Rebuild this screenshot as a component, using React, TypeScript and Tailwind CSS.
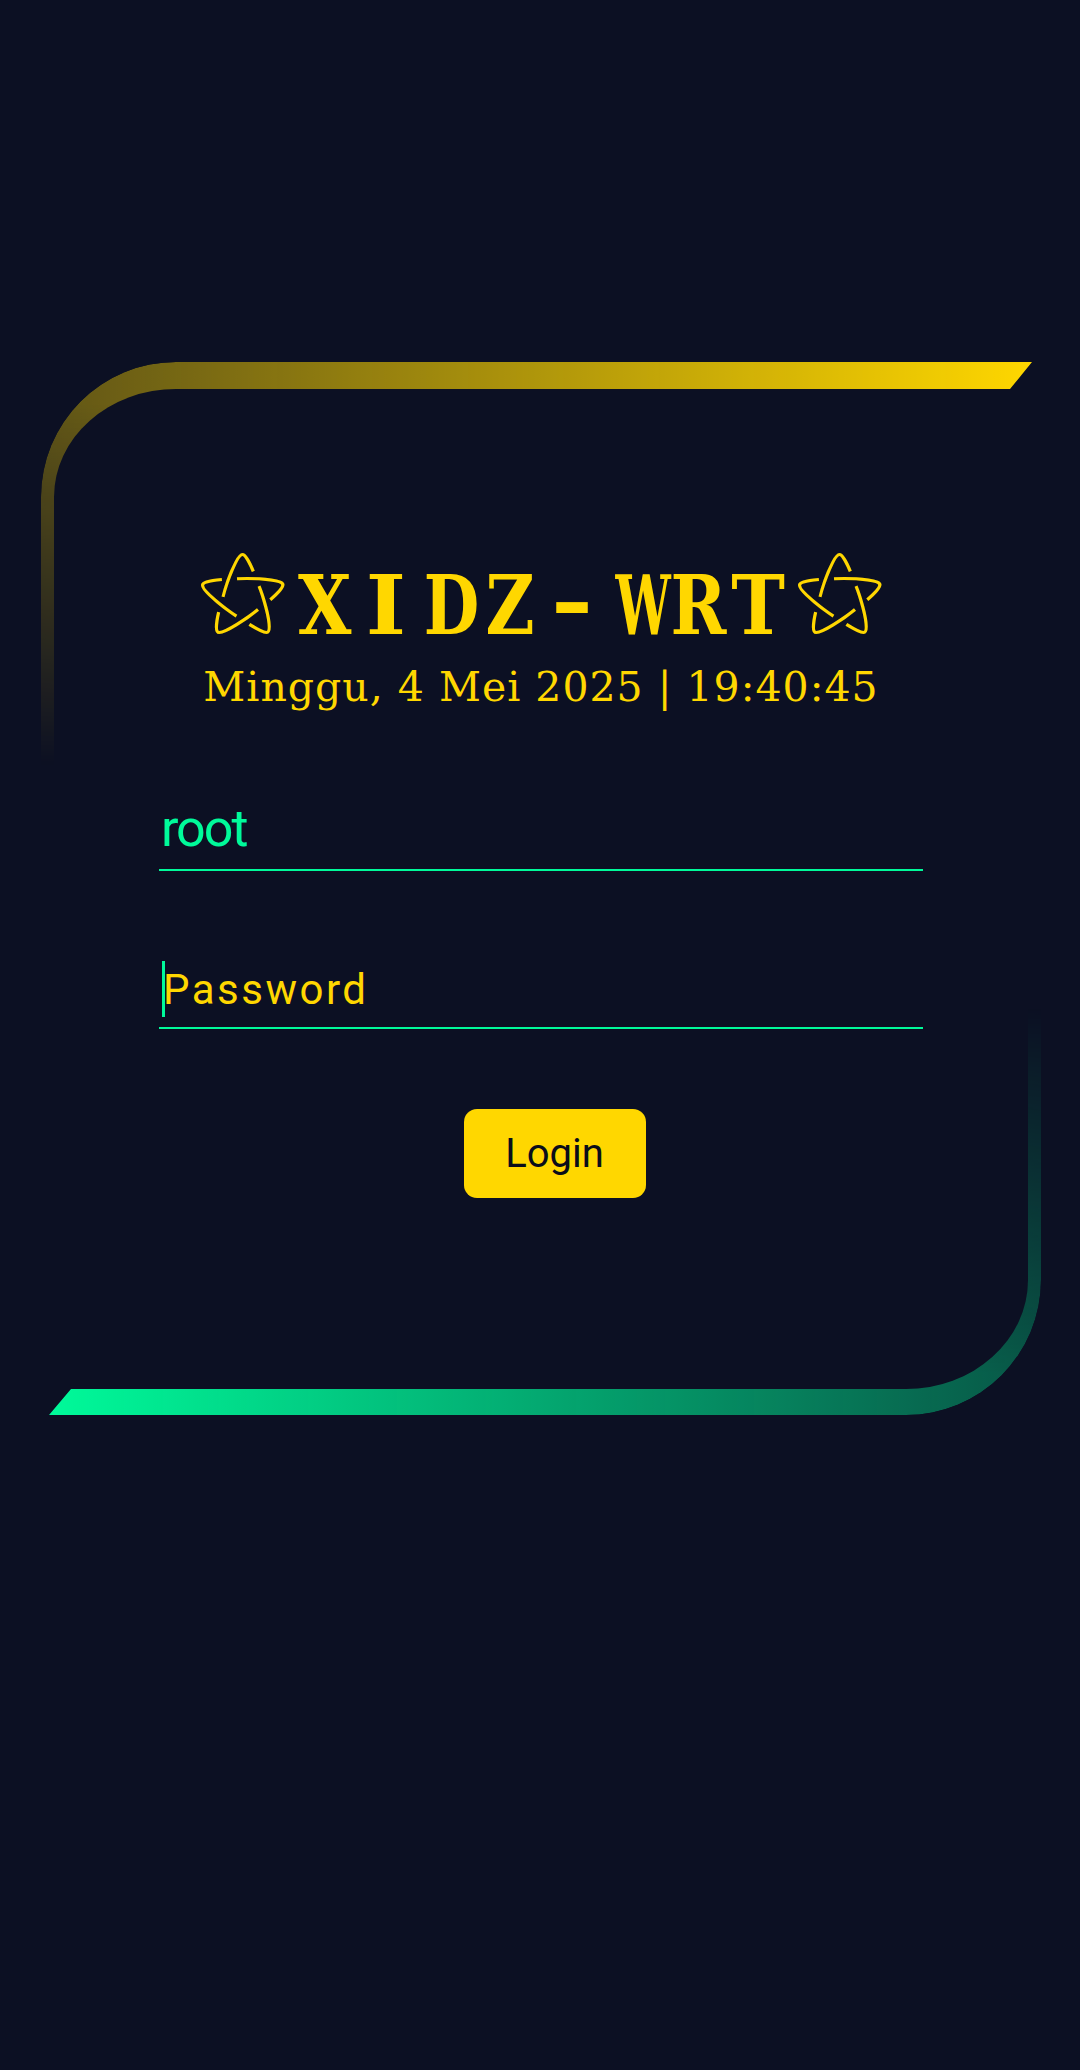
const letters = [
  { ch: 'X', cls: 'scale-x-[0.84]' },
  { ch: 'I', cls: 'scale-x-[1.05]' },
  { ch: 'D', cls: 'scale-x-[0.78]' },
  { ch: 'Z', cls: 'scale-x-[0.82]' },
  { ch: '-', cls: 'scale-x-[1.25] -translate-y-[4px]' },
  { ch: 'W', cls: 'scale-x-[0.6]' },
  { ch: 'R', cls: 'scale-x-[0.82]' },
  { ch: 'T', cls: 'scale-x-[0.88]' },
];

export default function App() {
  return (
    <div className="min-h-screen bg-[#0c1023] pt-[362px]">
      <div className="relative ml-[41px] h-[1053px] w-[1000px]">
        {/* top-left gold frame */}
        <div className="absolute left-0 top-0 h-[405px] w-[991px] [clip-path:polygon(0_0,100%_0,calc(100%-22px)_27px,calc(100%-22px)_100%,0_100%)] [mask-image:linear-gradient(to_bottom,black_10%,transparent_100%)]">
          <div className="h-full w-full rounded-tl-[135px] border-l-[13px] border-t-[27px] border-transparent bg-[linear-gradient(to_right,rgba(255,215,0,0.35),#ffd700)] bg-origin-border [mask-image:linear-gradient(#000,#000),linear-gradient(#000,#000)] [mask-clip:padding-box,border-box] [mask-composite:exclude]" />
        </div>

        {/* bottom-right green frame */}
        <div className="absolute bottom-0 right-0 h-[408px] w-[992px] [clip-path:polygon(22px_0,100%_0,100%_100%,0_100%,22px_calc(100%-26px))] [mask-image:linear-gradient(to_top,black_10%,transparent_100%)]">
          <div className="h-full w-full rounded-br-[135px] border-b-[26px] border-r-[13px] border-transparent bg-[linear-gradient(to_right,#00fa9a,rgba(0,250,154,0.3))] bg-origin-border [mask-image:linear-gradient(#000,#000),linear-gradient(#000,#000)] [mask-clip:padding-box,border-box] [mask-composite:exclude]" />
        </div>

        <div className="relative flex flex-col items-center pt-[193px]">
          <h1 className="flex items-baseline text-[#ffd700]">
            <span className="relative -top-[13px] mr-[6px] font-['DejaVu_Sans',sans-serif] text-[92px] font-normal leading-none">
              ⚝
            </span>
            {letters.map((l, i) => (
              <span
                key={i}
                className={`inline-block w-[62px] text-center font-['DejaVu_Serif',serif] text-[82px] font-bold leading-[100px] ${l.cls}`}
              >
                {l.ch}
              </span>
            ))}
            <span className="relative -top-[13px] ml-[6px] font-['DejaVu_Sans',sans-serif] text-[92px] font-normal leading-none">
              ⚝
            </span>
          </h1>
          <p className="mt-[12px] font-['DejaVu_Serif',serif] text-[41px] leading-none tracking-[1px] text-[#ffd700]">
            Minggu, 4 Mei 2025 | 19:40:45
          </p>

          <div className="mt-[85px] w-[764px]">
            <input
              type="text"
              defaultValue="root"
              className="block w-full border-b-2 border-[#00fa9a] bg-transparent pb-[10px] pl-[2px] pt-[6px] font-['Roboto',sans-serif] text-[52px] leading-[60px] tracking-[-2px] text-[#00fa9a] outline-none"
            />
            <div className="relative mt-[88px]">
              <input
                type="password"
                placeholder="Password"
                className="block w-full border-b-2 border-[#00fa9a] bg-transparent pb-[12px] pl-[4px] pt-[6px] font-['Roboto',sans-serif] text-[42px] leading-[50px] tracking-[2.5px] text-[#ffd700] outline-none placeholder:text-[#ffd700]"
              />
              <span className="absolute left-[3px] top-[2px] h-[56px] w-[3px] bg-[#00fa9a]" />
            </div>
          </div>

          <button className="ml-[27px] mt-[80px] h-[89px] w-[182px] rounded-[13px] bg-[#ffd700] font-['Roboto',sans-serif] text-[40px] text-[#0a0d1a]">
            Login
          </button>
        </div>
      </div>
    </div>
  );
}
